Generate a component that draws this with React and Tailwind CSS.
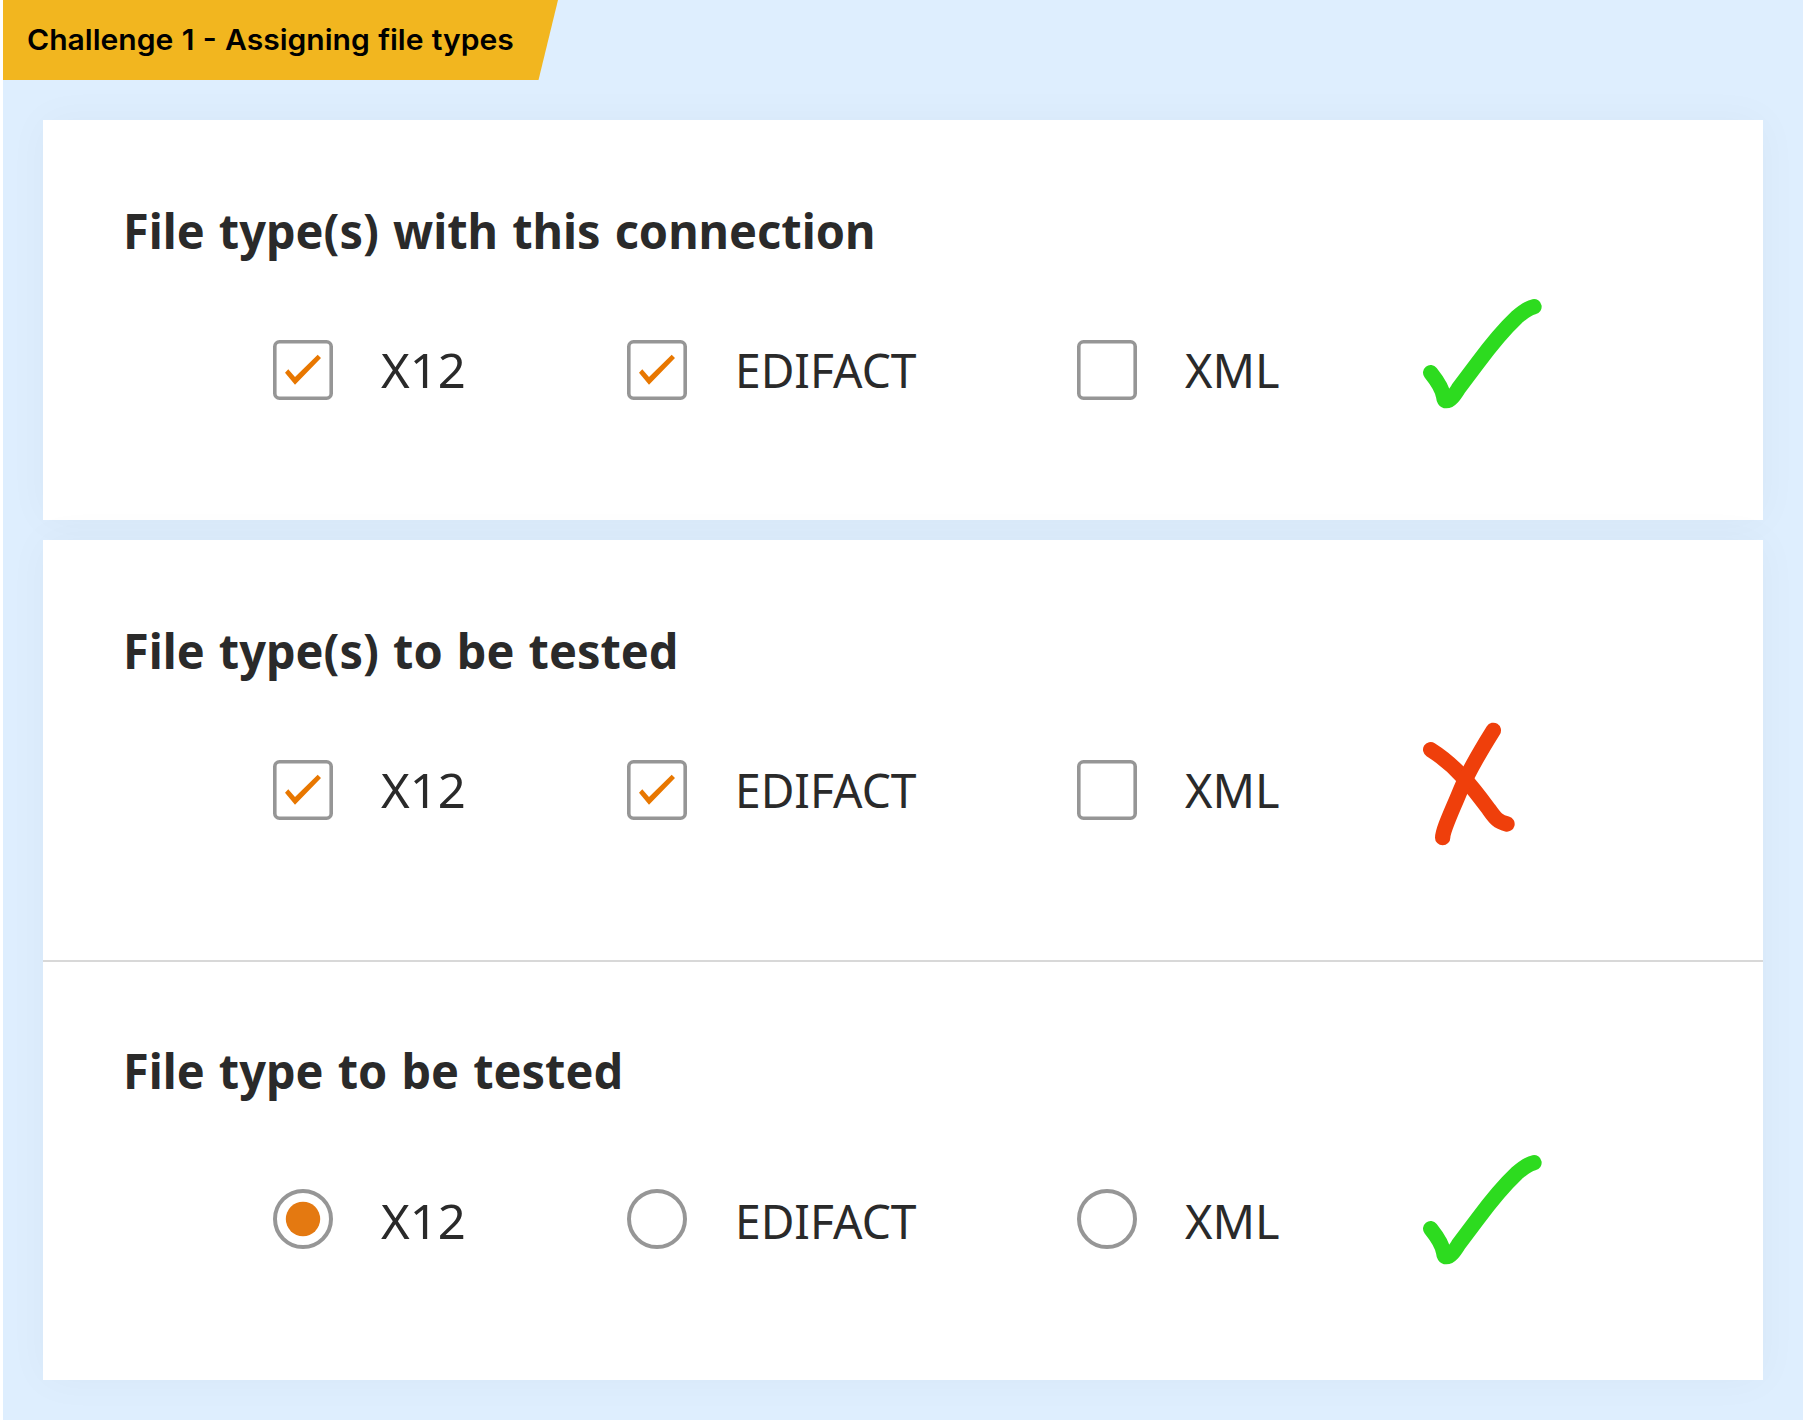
function GreenCheck() {
  return (
    <svg className="h-[140px] w-[170px]" viewBox="0 0 510 420" fill="none">
      <path
        d="M92 278 C112 303 128 330 131 350 Q132 362 139 362 C151 362 162 347 175 326 L232 250 C275 192 315 145 350 112 Q382 84 402 80"
        stroke="#2ddb1f"
        strokeWidth="46"
        strokeLinecap="round"
        strokeLinejoin="round"
      />
    </svg>
  );
}

function RedCross() {
  return (
    <svg className="h-[160px] w-[170px]" viewBox="0 0 510 480" fill="none">
      <g stroke="#ef3f0b" strokeWidth="46" strokeLinecap="round" strokeLinejoin="round">
        <path d="M92 149 C170 198 220 265 266 327 C287 357 294 365 321 372" />
        <path d="M280 91 C235 163 205 215 182 269 C156 333 128 390 128 413" />
      </g>
    </svg>
  );
}

function Checkbox({ checked }) {
  return (
    <svg className="size-[60px] shrink-0" viewBox="0 0 60 60">
      <rect x="1.8" y="1.8" width="56.4" height="56.4" rx="4.7" fill="#fff" stroke="#969696" strokeWidth="3.6" />
      {checked && <path d="M12 32.7 15.3 29.3 22 37 44.7 14.7 48 18 22 44.7Z" fill="#e87700" />}
    </svg>
  );
}

function Radio({ checked }) {
  return (
    <svg className="size-[60px] shrink-0" viewBox="0 0 60 60">
      <circle cx="30" cy="30" r="28" fill="#fff" stroke="#969696" strokeWidth="4" />
      {checked && <circle cx="30" cy="30" r="17.2" fill="#e47911" />}
    </svg>
  );
}

const options = [
  { label: 'X12', stretch: 'scale-x-[1.032]' },
  { label: 'EDIFACT', stretch: 'scale-x-[0.972]' },
  { label: 'XML', stretch: 'scale-x-[0.987]' },
];

function Question({ title, control: Control, selected, mark, className, rowClass, labelClass, markClass }) {
  return (
    <section className={className}>
      <h2 className="ml-[79.5px] h-[66px] origin-left scale-x-[0.957] whitespace-nowrap text-[49px] font-bold leading-[66px] [word-spacing:2px]">
        {title}
      </h2>
      <div className={`ml-[230px] grid grid-cols-[354px_450px_323px_170px] grid-rows-[60px] ${rowClass}`}>
        {options.map(({ label, stretch }) => (
          <div key={label} className="flex h-[60px] items-center gap-12">
            <Control checked={selected.includes(label)} />
            <span className={`origin-left text-[47.5px] leading-[64px] ${stretch} ${labelClass}`}>{label}</span>
          </div>
        ))}
        <div className={markClass}>{mark}</div>
      </div>
    </section>
  );
}

export default function App() {
  const card = 'mx-10 bg-white shadow-[0_0_40px_rgba(0,20,60,0.035)]';
  return (
    <div className="h-[1423px] w-[1806px] overflow-hidden bg-white pl-[3px] font-['Noto_Sans',sans-serif] text-[#2a2a2a]">
      <div className="h-[1420px] w-[1800px] bg-[#deeefe]">
        <header className="mb-10 flex h-20 w-[555px] items-center bg-[#f2b61f] pl-[23.5px] [clip-path:polygon(0_0,100%_0,535.5px_100%,0_100%)]">
          <h1 className="origin-left scale-x-[1.037] whitespace-nowrap font-['Inter',sans-serif] text-[29px] font-semibold leading-9 text-black [word-spacing:0.7px]">
            Challenge 1 - Assigning file types
          </h1>
        </header>
        <div className={`h-[400px] ${card}`}>
          <Question
            className="pt-[77px]"
            title="File type(s) with this connection"
            control={Checkbox}
            selected={['X12', 'EDIFACT']}
            rowClass="mt-[77px]"
            labelClass=""
            mark={<GreenCheck />}
            markClass="-mt-[60px]"
          />
        </div>
        <div className={`mt-5 h-[840px] ${card}`}>
          <Question
            className="h-[420px] pt-[77px]"
            title="File type(s) to be tested"
            control={Checkbox}
            selected={['X12', 'EDIFACT']}
            rowClass="mt-[77px]"
            labelClass=""
            mark={<RedCross />}
            markClass="-mt-[60px]"
          />
          <Question
            className="h-[420px] border-t-2 border-[#d8d8d8] pt-[75px]"
            title="File type to be tested"
            control={Radio}
            selected={['X12']}
            rowClass="mt-[86px]"
            labelClass="mt-[3px]"
            mark={<GreenCheck />}
            markClass="-mt-[53px]"
          />
        </div>
      </div>
    </div>
  );
}
